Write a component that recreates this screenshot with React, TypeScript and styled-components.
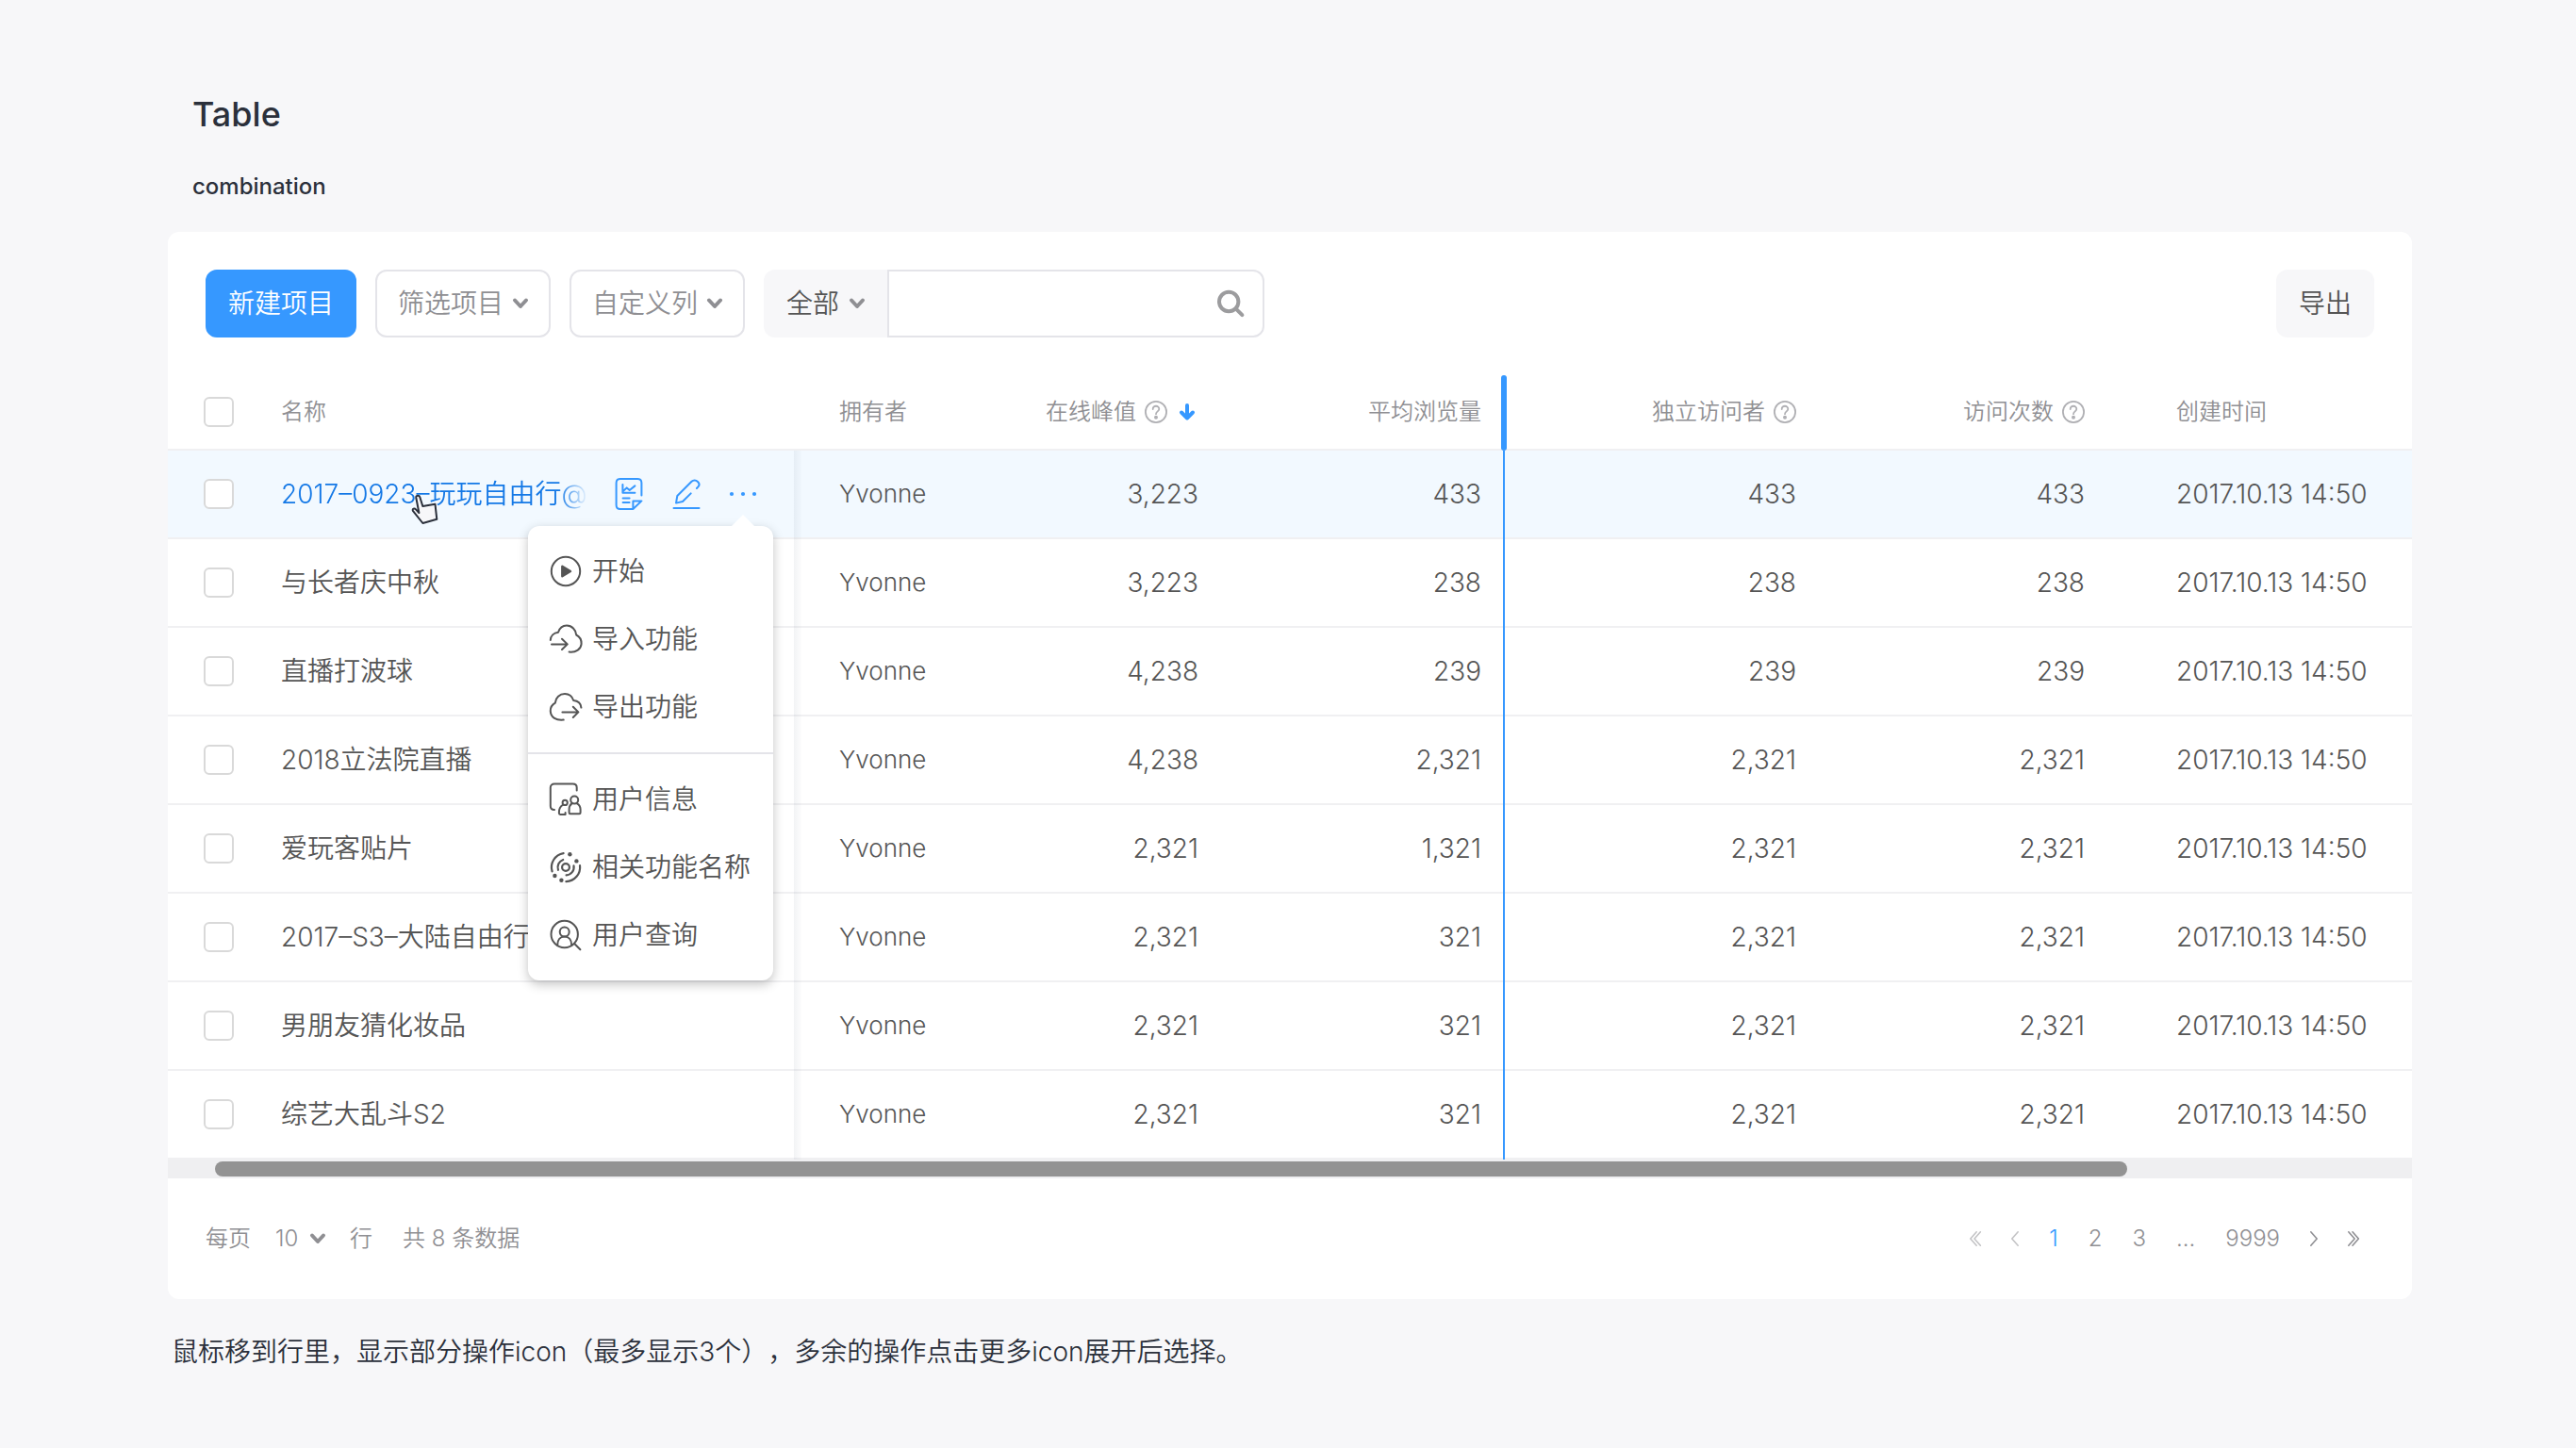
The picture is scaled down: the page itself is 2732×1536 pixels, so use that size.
import React from "react";
import styled, { createGlobalStyle, css } from "styled-components";

const color = {
  page: "#f7f7f9",
  primary: "#3698ff",
  link: "#1478e6",
  ink: "#2b303b",
  text: "#555555",
  muted: "#8f8f93",
  line: "#e4e4e9",
  rowLine: "#f0f0f2",
  hover: "#f2f9ff",
};

const GlobalStyle = createGlobalStyle`
  *, *::before, *::after { box-sizing: border-box; }
  body {
    margin: 0;
    background: ${color.page};
    color: ${color.text};
    font-family: Inter, "Noto Sans CJK SC", sans-serif;
    font-size: 28px;
    font-weight: 350;
    line-height: 40px;
    text-spacing-trim: space-all;
  }
  button, input, select { font: inherit; color: inherit; margin: 0; padding: 0; border: 0; background: none; }
  button, select { cursor: pointer; }
  svg { display: block; flex: none; overflow: visible; }
`;

const Page = styled.main`
  padding: 100px 174px 60px 178px;
`;

const Title = styled.h1`
  margin: 0 0 40px;
  padding-left: 26px;
  font-size: 36px;
  line-height: 42px;
  font-weight: 500;
  color: ${color.ink};
`;

const Subtitle = styled.h2`
  margin: 0 0 32px;
  padding-left: 26px;
  font-size: 24px;
  line-height: 32px;
  font-weight: 450;
  color: ${color.ink};
`;

const Card = styled.section`
  background: #fff;
  border-radius: 12px;
`;

const Toolbar = styled.div`
  display: flex;
  gap: 20px;
  padding: 40px;
`;

const Button = styled.button<{ $kind: "primary" | "outline" | "soft" }>`
  display: flex;
  align-items: center;
  gap: 10px;
  height: 72px;
  padding: 0 22px;
  border: 2px solid transparent;
  border-radius: 12px;
  white-space: nowrap;
  ${(p) =>
    p.$kind === "primary" &&
    css`
      background: ${color.primary};
      border-color: ${color.primary};
      color: #fff;
    `}
  ${(p) =>
    p.$kind === "outline" &&
    css`
      border-color: ${color.line};
      color: ${color.muted};
    `}
  ${(p) =>
    p.$kind === "soft" &&
    css`
      background: ${color.page};
      border-color: ${color.page};
      margin-left: auto;
    `}
`;

const SearchGroup = styled.div`
  display: flex;
`;

const SelectBox = styled.div<{ $filled?: boolean }>`
  position: relative;
  display: flex;
  align-items: center;
  color: ${(p) => (p.$filled ? color.text : color.muted)};
  background: ${(p) => (p.$filled ? color.page : "transparent")};
  border-radius: 12px 0 0 12px;
  select {
    appearance: none;
    height: ${(p) => (p.$filled ? 72 : 40)}px;
    padding: ${(p) => (p.$filled ? "0 50px 0 24px" : "0 28px 0 0")};
  }
  svg {
    position: absolute;
    right: ${(p) => (p.$filled ? 24 : 0)}px;
    pointer-events: none;
  }
`;

const SearchField = styled.div`
  display: flex;
  align-items: center;
  width: 400px;
  height: 72px;
  padding: 0 20px;
  border: 2px solid ${color.line};
  border-radius: 0 12px 12px 0;
  input {
    flex: 1;
    min-width: 0;
    height: 40px;
    outline: none;
  }
`;

const Table = styled.table`
  width: 100%;
  table-layout: fixed;
  border-collapse: separate;
  border-spacing: 0;
`;

type Align = { $right?: boolean; $pad?: number };

const cell = css<Align>`
  position: relative;
  padding: 0 ${(p) => (p.$right ? 24 : 0)}px 0 ${(p) => p.$pad ?? 0}px;
  text-align: ${(p) => (p.$right ? "right" : "left")};
  border-bottom: 2px solid ${color.rowLine};
  white-space: nowrap;
`;

const Th = styled.th<Align>`
  ${cell}
  height: 80px;
  font-size: 24px;
  font-weight: 350;
  color: ${color.muted};
`;

const HeadLabel = styled.span<{ $right?: boolean }>`
  display: flex;
  align-items: center;
  justify-content: ${(p) => (p.$right ? "flex-end" : "flex-start")};
  gap: 9px;
`;

const IconButton = styled.button`
  display: flex;
  align-items: center;
  justify-content: center;
`;

const ResizeHandle = styled.span`
  position: absolute;
  z-index: 1;
  top: 0;
  right: -3px;
  bottom: -2px;
  width: 6px;
  border-radius: 3px;
  background: ${color.primary};
  cursor: col-resize;
`;

const Td = styled.td<Align & { $small?: boolean; $frozen?: boolean; $resizing?: boolean }>`
  ${cell}
  height: 94px;
  font-size: ${(p) => (p.$small ? 26 : 28)}px;
  ${(p) =>
    p.$frozen &&
    css`
      &::after {
        content: "";
        position: absolute;
        z-index: 1;
        top: 0;
        right: -8px;
        bottom: -2px;
        width: 8px;
        background: linear-gradient(90deg, rgba(40, 60, 90, 0.06), rgba(40, 60, 90, 0.01));
      }
    `}
  ${(p) =>
    p.$resizing &&
    css`
      &::after {
        content: "";
        position: absolute;
        z-index: 1;
        top: 0;
        right: -1px;
        bottom: -2px;
        width: 2px;
        background: ${color.primary};
      }
    `}
`;

const Tr = styled.tr<{ $active?: boolean }>`
  background: ${(p) => (p.$active ? color.hover : "transparent")};
`;

const Checkbox = styled.input`
  appearance: none;
  display: block;
  width: 32px;
  height: 32px;
  border: 2px solid #d9d9d9;
  border-radius: 6px;
  background: #fff;
  &:checked {
    background: ${color.primary};
    border-color: ${color.primary};
  }
`;

const NameCell = styled.div`
  display: flex;
  align-items: center;
  justify-content: space-between;
  gap: 28px;
  padding-right: 38px;
`;

const NameLink = styled.a`
  flex: 1;
  min-width: 0;
  overflow: hidden;
  color: ${color.link};
  text-decoration: none;
  -webkit-mask-image: linear-gradient(90deg, #000 calc(100% - 32px), transparent);
  mask-image: linear-gradient(90deg, #000 calc(100% - 32px), transparent);
`;

const RowActions = styled.div`
  display: flex;
  gap: 28px;
  color: ${color.primary};
`;

const MoreAnchor = styled.div`
  position: relative;
`;

const Menu = styled.div`
  position: absolute;
  z-index: 10;
  top: 50px;
  right: -16px;
  width: 260px;
  color: ${color.text};
  background: #fff;
  border-radius: 12px;
  box-shadow: 0 4px 12px rgba(0, 0, 0, 0.24);
  &::before {
    content: "";
    position: absolute;
    top: -12px;
    right: 20px;
    border: 12px solid transparent;
    border-top: 0;
    border-bottom-color: #fff;
  }
`;

const MenuGroup = styled.div`
  padding: 12px 0;
  & + & {
    border-top: 2px solid ${color.line};
  }
`;

const MenuItem = styled.button`
  display: flex;
  align-items: center;
  gap: 12px;
  width: 100%;
  height: 72px;
  padding: 0 24px;
  white-space: nowrap;
`;

const Pointer = styled.svg`
  position: absolute;
  left: 138px;
  top: 46px;
  pointer-events: none;
`;

const ScrollTrack = styled.div`
  height: 20px;
  padding: 2px 0;
  background: #efeff1;
`;

const ScrollThumb = styled.div`
  width: 85.2%;
  height: 16px;
  margin-left: 2.1%;
  border-radius: 8px;
  background: #939393;
`;

const Footer = styled.footer`
  display: flex;
  align-items: center;
  justify-content: space-between;
  height: 128px;
  padding: 0 56px 0 40px;
  font-size: 24px;
  color: ${color.muted};
`;

const PageSize = styled.div`
  display: flex;
  align-items: center;
  gap: 26px;
`;

const Total = styled.span`
  padding-left: 6px;
`;

const Pager = styled.nav`
  display: flex;
  align-items: center;
  gap: 32px;
`;

const PageButton = styled.button<{ $current?: boolean; $off?: boolean }>`
  color: ${(p) => (p.$current ? color.primary : p.$off ? "#c4c4c6" : color.muted)};
`;

const Note = styled.p`
  margin: 36px 0 0;
  padding-left: 4px;
  color: ${color.ink};
`;

const stroke = { fill: "none", stroke: "currentColor", strokeWidth: 2, strokeLinecap: "round", strokeLinejoin: "round" } as const;

const Chevron = () => (
  <svg width="16" height="12" viewBox="0 0 16 12" {...stroke} stroke={color.muted} strokeWidth={4}>
    <path d="M2 2.5L8 9L14 2.5" />
  </svg>
);

const SearchIcon = () => (
  <svg width="28" height="28" viewBox="0 0 28 28" {...stroke} stroke="#9c9c9e" strokeWidth={4}>
    <circle cx="12.2" cy="12" r="10.2" />
    <path d="M19.8 19.6L26.4 26.2" />
  </svg>
);

const HelpIcon = () => (
  <svg width="24" height="24" viewBox="0 0 24 24" {...stroke} stroke="#b0b0b4" strokeWidth={1.8}>
    <circle cx="12" cy="12" r="11.1" />
    <path d="M8.7 9C8.7 4.6 15.4 4.8 15.3 8.9C15.2 11.4 12 11.4 12 14.2" />
    <circle cx="12" cy="17.8" r="1.1" fill="#b0b0b4" />
  </svg>
);

const SortDown = () => (
  <svg width="24" height="24" viewBox="0 0 24 24" {...stroke} stroke={color.primary} strokeWidth={4}>
    <path d="M12 5V18M6 12.5L12 18.5L18 12.5" />
  </svg>
);

const Icon = ({ children }: { children: React.ReactNode }) => (
  <svg width="32" height="32" viewBox="0 0 32 32" aria-hidden="true" {...stroke}>
    {children}
  </svg>
);

const ReportIcon = () => (
  <Icon>
    <path d="M28.4 17.5V4.2C28.4 1.6 26.8 0 24.2 0H5.8C3.2 0 1.6 1.6 1.6 4.2V27.8C1.6 30.4 3.2 32 5.8 32H19.4L28.4 23.4H19.4V32" />
    <path d="M8.4 6V14.8H21.4M9.4 12.4L12.7 9.4L15.7 12L21.4 7.4M8.6 20.6H15.6M8.6 25H15.6" />
  </Icon>
);

const EditIcon = () => (
  <Icon>
    <path d="M20.7 15.4L12 24L5 25.6L6.3 18L21.5 2.8C23.4 .9 26 1 28 3C29.9 4.9 29.8 7 28.4 8.4L26.9 10M2.5 31H29.5" />
  </Icon>
);

const MoreIcon = () => (
  <Icon>
    <g fill="currentColor" stroke="none">
      <circle cx="4" cy="16" r="2.1" />
      <circle cx="16" cy="16" r="2.1" />
      <circle cx="28" cy="16" r="2.1" />
    </g>
  </Icon>
);

const PlayIcon = () => (
  <Icon>
    <circle cx="16" cy="16" r="15.2" />
    <path d="M12.3 10.8V21.2L21 16Z" fill="currentColor" strokeWidth={2.4} />
  </Icon>
);

const ImportIcon = () => (
  <Icon>
    <path d="M-.2 17C0 12.5 3.3 9.3 8 8.8C9.5 4.2 13 1.6 17 1.6C22.5 1.6 26.8 6 27.2 11.5C31 13.5 32.8 17 32.6 21C32.2 26.5 27 30.3 19.6 29.6" />
    <path d="M1 21.4H17.4M12 15.8L17.8 21.4L12 27" />
  </Icon>
);

const ExportIcon = () => (
  <Icon>
    <path d="M13.7 29.6C6 30.5 .2 27 -.2 20.6C-.4 16.8 1.6 13.4 4.8 11.6C5.2 6 9.6 2 15 2C19.2 2 22.8 4.6 24.2 9C28.8 9.4 32 12.4 32.4 16.6" />
    <path d="M12.4 21.4H29M23.8 15.8L29.4 21.4L23.8 27" />
  </Icon>
);

const UserInfoIcon = () => (
  <Icon>
    <path d="M27.7 6.5V3.6C27.7 1 26.2 -.4 23.6 -.4H4C1.4 -.4 -.2 1 -.2 3.6V23C-.2 25.4 1.4 27 4 27" />
    <circle cx="25.2" cy="16.6" r="4" />
    <path d="M22.4 20.4C20.6 21.8 19.6 24 19.6 26.6V30C19.6 30.8 20 31.2 20.8 31.2H30.4C31.2 31.2 31.6 30.8 31.6 30V26.6C31.6 24 30 21.6 28 20.4" />
    <circle cx="15.2" cy="19.4" r="2.6" />
    <path d="M12.6 22C10 23.8 8.9 26.4 8.9 29.4V30.6C8.9 31.4 9.4 32 10.2 32H15.6V30" />
  </Icon>
);

const RadarIcon = () => (
  <Icon>
    <g strokeWidth={2.2}>
      <circle cx="16" cy="16" r="3.9" />
      <path d="M8 18.8A8.5 8.5 0 0 1 13.2 8M24.5 14.4A8.5 8.5 0 0 1 16.6 24.4" />
      <path d="M1.6 20.4A15.1 15.1 0 0 1 13.6 1.1M31 14A15.1 15.1 0 0 1 16.4 31.1" />
    </g>
    <g fill="currentColor" stroke="none">
      <circle cx="20.4" cy="2.3" r="2.2" />
      <circle cx="27.4" cy="9.4" r="2.2" />
      <circle cx="4.4" cy="25" r="2.2" />
      <circle cx="11.4" cy="29.7" r="2.2" />
    </g>
  </Icon>
);

const UserSearchIcon = () => (
  <Icon>
    <circle cx="14.7" cy="15" r="14.2" />
    <circle cx="14.7" cy="12.4" r="5" />
    <path d="M7.2 26.6C7.2 21 10.2 17.6 14.7 17.6C19.2 17.6 22.2 21 22.2 26.6M25.2 25L31.4 31.2" />
  </Icon>
);

const PagerIcon = ({ double, next }: { double?: boolean; next?: boolean }) => {
  const w = double ? 12 : 8;
  return (
    <svg width={w} height="16" viewBox={`0 0 ${w} 16`} {...stroke} strokeWidth={1.6}>
      {next ? (
        <path d={double ? "M.8.8L7.2 8L.8 15.2M5 .8L11.4 8L5 15.2" : "M.8.8L7.2 8L.8 15.2"} />
      ) : (
        <path d={double ? "M7.2.8L.8 8L7.2 15.2M11.4.8L5 8L11.4 15.2" : "M7.2.8L.8 8L7.2 15.2"} />
      )}
    </svg>
  );
};

const menu = [
  [
    { label: "开始", icon: <PlayIcon /> },
    { label: "导入功能", icon: <ImportIcon /> },
    { label: "导出功能", icon: <ExportIcon /> },
  ],
  [
    { label: "用户信息", icon: <UserInfoIcon /> },
    { label: "相关功能名称", icon: <RadarIcon /> },
    { label: "用户查询", icon: <UserSearchIcon /> },
  ],
];

const rows = [
  ["2017–0923–玩玩自由行@", "3,223", "433", "433"],
  ["与长者庆中秋", "3,223", "238", "238"],
  ["直播打波球", "4,238", "239", "239"],
  ["2018立法院直播", "4,238", "2,321", "2,321"],
  ["爱玩客贴片", "2,321", "1,321", "2,321"],
  ["2017–S3–大陆自由行", "2,321", "321", "2,321"],
  ["男朋友猜化妆品", "2,321", "321", "2,321"],
  ["综艺大乱斗S2", "2,321", "321", "2,321"],
];

const Help = ({ topic }: { topic: string }) => (
  <IconButton type="button" aria-label={`${topic}说明`}>
    <HelpIcon />
  </IconButton>
);

const ActiveName = ({ name }: { name: string }) => (
  <>
    <NameCell>
      <NameLink href="#">{name}</NameLink>
      <RowActions>
        <IconButton type="button" aria-label="报表"><ReportIcon /></IconButton>
        <IconButton type="button" aria-label="编辑"><EditIcon /></IconButton>
        <MoreAnchor>
          <IconButton type="button" aria-label="更多" aria-expanded="true"><MoreIcon /></IconButton>
          <Menu role="menu">
            {menu.map((group, i) => (
              <MenuGroup key={i}>
                {group.map((item) => (
                  <MenuItem key={item.label} type="button" role="menuitem">
                    {item.icon}
                    {item.label}
                  </MenuItem>
                ))}
              </MenuGroup>
            ))}
          </Menu>
        </MoreAnchor>
      </RowActions>
    </NameCell>
    <Pointer width="30" height="34" viewBox="0 0 30 34" aria-hidden="true">
      <path
        d="M5.3 4C4.8 1.3 8.5 .8 9.3 3.2L12.3 13L25.5 10.8L27.3 26.8L12.4 31L1.9 17.8C.9 15.8 3.6 14.6 5 16.4L8.4 20Z"
        fill="#f7f7f9"
        stroke={color.ink}
        strokeWidth="2"
        strokeLinejoin="round"
      />
    </Pointer>
  </>
);

export default function App() {
  return (
    <>
      <GlobalStyle />
      <Page lang="zh-CN">
        <Title>Table</Title>
        <Subtitle>combination</Subtitle>
        <Card>
          <Toolbar>
            <Button type="button" $kind="primary">新建项目</Button>
            <Button type="button" $kind="outline" aria-haspopup="menu">筛选项目<Chevron /></Button>
            <Button type="button" $kind="outline" aria-haspopup="menu">自定义列<Chevron /></Button>
            <SearchGroup role="search">
              <SelectBox $filled>
                <select aria-label="搜索范围"><option>全部</option></select>
                <Chevron />
              </SelectBox>
              <SearchField>
                <input type="text" aria-label="搜索" />
                <IconButton type="button" aria-label="搜索"><SearchIcon /></IconButton>
              </SearchField>
            </SearchGroup>
            <Button type="button" $kind="soft">导出</Button>
          </Toolbar>
          <Table>
            <colgroup>
              <col style={{ width: 120 }} />
              <col style={{ width: 544 }} />
              <col style={{ width: 200 }} />
              <col style={{ width: 253 }} />
              <col style={{ width: 300 }} />
              <col style={{ width: 334 }} />
              <col style={{ width: 306 }} />
              <col />
            </colgroup>
            <thead>
              <tr>
                <Th $pad={38}><Checkbox type="checkbox" aria-label="全选" /></Th>
                <Th>名称</Th>
                <Th $pad={48}>拥有者</Th>
                <Th $right aria-sort="descending">
                  <HeadLabel $right>在线峰值<Help topic="在线峰值" /><SortDown /></HeadLabel>
                </Th>
                <Th $right>平均浏览量<ResizeHandle /></Th>
                <Th $right><HeadLabel $right>独立访问者<Help topic="独立访问者" /></HeadLabel></Th>
                <Th $right><HeadLabel $right>访问次数<Help topic="访问次数" /></HeadLabel></Th>
                <Th $pad={73}>创建时间</Th>
              </tr>
            </thead>
            <tbody>
              {rows.map(([name, peak, views, visits], i) => (
                <Tr key={name} $active={i === 0}>
                  <Td $pad={38}><Checkbox type="checkbox" aria-label={name} /></Td>
                  <Td $frozen>{i === 0 ? <ActiveName name={name} /> : name}</Td>
                  <Td $pad={48} $small>Yvonne</Td>
                  <Td $right>{peak}</Td>
                  <Td $right $resizing>{views}</Td>
                  <Td $right>{visits}</Td>
                  <Td $right>{visits}</Td>
                  <Td $pad={73}>2017.10.13 14:50</Td>
                </Tr>
              ))}
            </tbody>
          </Table>
          <ScrollTrack><ScrollThumb /></ScrollTrack>
          <Footer>
            <PageSize>
              <label htmlFor="page-size">每页</label>
              <SelectBox>
                <select id="page-size"><option>10</option></select>
                <Chevron />
              </SelectBox>
              <span>行</span>
              <Total>共 8 条数据</Total>
            </PageSize>
            <Pager aria-label="分页">
              <PageButton type="button" $off aria-label="首页"><PagerIcon double /></PageButton>
              <PageButton type="button" $off aria-label="上一页"><PagerIcon /></PageButton>
              <PageButton type="button" $current aria-current="page">1</PageButton>
              <PageButton type="button">2</PageButton>
              <PageButton type="button">3</PageButton>
              <span>...</span>
              <PageButton type="button">9999</PageButton>
              <PageButton type="button" aria-label="下一页"><PagerIcon next /></PageButton>
              <PageButton type="button" aria-label="末页"><PagerIcon double next /></PageButton>
            </Pager>
          </Footer>
        </Card>
        <Note>鼠标移到行里，显示部分操作icon（最多显示3个），多余的操作点击更多icon展开后选择。</Note>
      </Page>
    </>
  );
}
